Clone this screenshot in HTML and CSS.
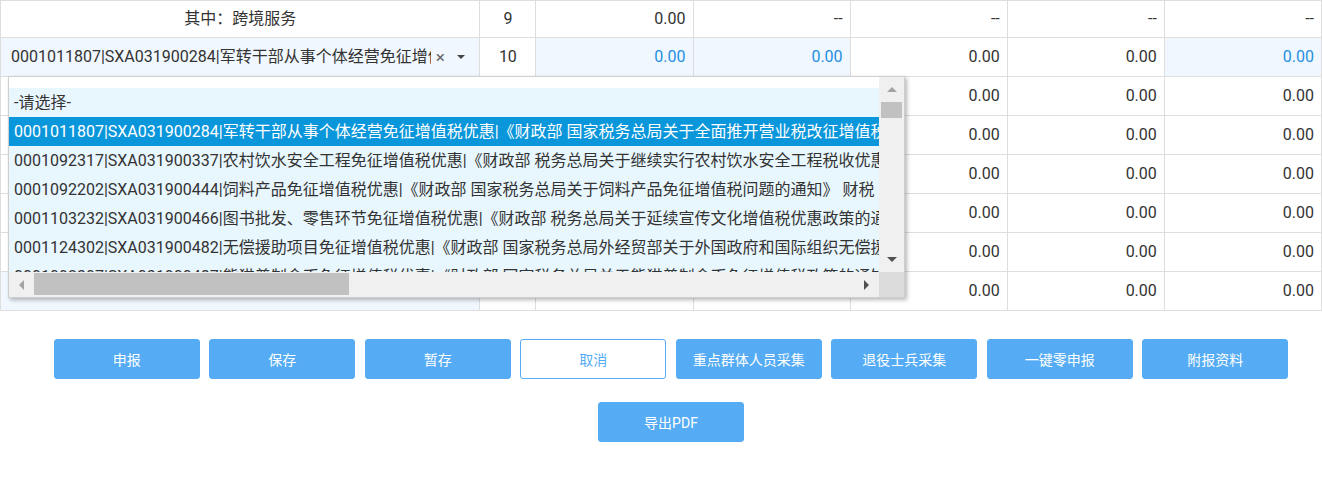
FILE: index.html
```html
<!DOCTYPE html>
<html lang="zh-CN">
<head>
<meta charset="utf-8">
<title>减免税申报</title>
<link rel="stylesheet" href="styles.css">
</head>
<body>
<div class="page">
  <div class="grid-wrap">
    <table class="tbl">
      <colgroup>
        <col class="c-name"><col class="c-no"><col class="c-val"><col class="c-val"><col class="c-val"><col class="c-val"><col class="c-val">
      </colgroup>
      <tbody>
        <tr class="row first">
          <td class="center">其中：跨境服务</td>
          <td class="center">9</td>
          <td class="num">0.00</td>
          <td class="num">--</td>
          <td class="num">--</td>
          <td class="num">--</td>
          <td class="num">--</td>
        </tr>
        <tr class="row">
          <td class="sel-cell">
            <div class="select">
              <span class="sel-text">0001011807|SXA031900284|军转干部从事个体经营免征增值税优惠</span>
              <span class="clear">×</span>
              <span class="caret"></span>
            </div>
          </td>
          <td class="center">10</td>
          <td class="num edit">0.00</td>
          <td class="num edit">0.00</td>
          <td class="num">0.00</td>
          <td class="num">0.00</td>
          <td class="num edit">0.00</td>
        </tr>
        <tr class="row">
          <td></td><td class="center">11</td>
          <td class="num">0.00</td><td class="num">0.00</td><td class="num">0.00</td><td class="num">0.00</td><td class="num">0.00</td>
        </tr>
        <tr class="row">
          <td></td><td class="center">12</td>
          <td class="num">0.00</td><td class="num">0.00</td><td class="num">0.00</td><td class="num">0.00</td><td class="num">0.00</td>
        </tr>
        <tr class="row">
          <td></td><td class="center">13</td>
          <td class="num">0.00</td><td class="num">0.00</td><td class="num">0.00</td><td class="num">0.00</td><td class="num">0.00</td>
        </tr>
        <tr class="row">
          <td></td><td class="center">14</td>
          <td class="num">0.00</td><td class="num">0.00</td><td class="num">0.00</td><td class="num">0.00</td><td class="num">0.00</td>
        </tr>
        <tr class="row">
          <td></td><td class="center">15</td>
          <td class="num">0.00</td><td class="num">0.00</td><td class="num">0.00</td><td class="num">0.00</td><td class="num">0.00</td>
        </tr>
        <tr class="row">
          <td class="sel-cell blank"></td><td class="center">16</td>
          <td class="num">0.00</td><td class="num">0.00</td><td class="num">0.00</td><td class="num">0.00</td><td class="num">0.00</td>
        </tr>
      </tbody>
    </table>

    <div class="dropdown">
      <div class="list">
        <ul class="options">
          <li class="opt">-请选择-</li>
          <li class="opt active">0001011807|SXA031900284|军转干部从事个体经营免征增值税优惠|《财政部 国家税务总局关于全面推开营业税改征增值税试点的通知》</li>
          <li class="opt">0001092317|SXA031900337|农村饮水安全工程免征增值税优惠|《财政部 税务总局关于继续实行农村饮水安全工程税收优惠政策的公告》</li>
          <li class="opt">0001092202|SXA031900444|饲料产品免征增值税优惠|《财政部 国家税务总局关于饲料产品免征增值税问题的通知》 财税〔2001〕121号</li>
          <li class="opt">0001103232|SXA031900466|图书批发、零售环节免征增值税优惠|《财政部 税务总局关于延续宣传文化增值税优惠政策的通知》</li>
          <li class="opt">0001124302|SXA031900482|无偿援助项目免征增值税优惠|《财政部 国家税务总局外经贸部关于外国政府和国际组织无偿援助项目免征增值税的通知》</li>
          <li class="opt">0001092307|SXA031900487|熊猫普制金币免征增值税优惠|《财政部 国家税务总局关于熊猫普制金币免征增值税政策的通知》</li>
        </ul>
      </div>
      <div class="vscroll">
        <div class="sb-btn"><span class="tri up"></span></div>
        <div class="vthumb"></div>
        <div class="sb-space"></div>
        <div class="sb-btn"><span class="tri down"></span></div>
      </div>
      <div class="hscroll">
        <div class="sb-btn"><span class="tri left"></span></div>
        <div class="hthumb"></div>
        <div class="sb-space"></div>
        <div class="sb-btn"><span class="tri right"></span></div>
      </div>
      <div class="corner"></div>
    </div>
  </div>

  <div class="actions">
    <div class="btn-row">
      <button class="btn">申报</button>
      <button class="btn">保存</button>
      <button class="btn">暂存</button>
      <button class="btn ghost">取消</button>
      <button class="btn">重点群体人员采集</button>
      <button class="btn">退役士兵采集</button>
      <button class="btn">一键零申报</button>
      <button class="btn">附报资料</button>
    </div>
    <div class="btn-row second">
      <button class="btn">导出PDF</button>
    </div>
  </div>
</div>
</body>
</html>
```

FILE: styles.css
```css
* { box-sizing: border-box; }

html, body {
  margin: 0;
  padding: 0;
  background: #fff;
}

body {
  font-family: Roboto, "Noto Sans CJK SC", sans-serif;
  font-size: 16px;
  color: #333;
}

.page {
  width: 1322px;
}

.grid-wrap {
  position: relative;
}

.tbl {
  width: 1322px;
  table-layout: fixed;
  border-collapse: collapse;
  border: 1px solid #dedede;
}

.c-name { width: 479px; }
.c-no { width: 56px; }
.c-val { width: 157px; }

.tbl td {
  border: 1px solid #dedede;
  padding: 0 7px;
  line-height: 20px;
  white-space: nowrap;
  overflow: hidden;
}

.row { height: 39px; }
.row.first { height: 37px; }

.center { text-align: center; }
.num { text-align: right; }

.edit {
  background: #f0f7fe;
  color: #2590e4;
}

.sel-cell {
  background: #f0f7fe;
}
.tbl td.sel-cell { padding: 0; }

.select {
  display: flex;
  align-items: center;
  padding: 0 14px 0 10px;
}

.sel-text {
  flex: 1;
  min-width: 0;
  overflow: hidden;
  white-space: nowrap;
}

.clear {
  width: 12px;
  margin-left: 3px;
  text-align: center;
  color: #666;
  font-size: 17px;
}

.caret {
  width: 0;
  height: 0;
  margin-left: 11px;
  border-left: 4px solid transparent;
  border-right: 4px solid transparent;
  border-top: 4px solid #444;
}

/* dropdown */
.dropdown {
  position: absolute;
  left: 8px;
  top: 76px;
  width: 897px;
  height: 222px;
  border: 1px solid #cfcfcf;
  background: #fff;
  box-shadow: 2px 2px 4px rgba(0, 0, 0, 0.28);
  display: grid;
  grid-template-columns: 1fr 25px;
  grid-template-rows: 1fr 25px;
}

.list {
  overflow: hidden;
  padding-top: 11px;
  background: #fff;
}

.options {
  list-style: none;
  margin: 0;
  padding: 0;
  background: #e8f6fe;
}

.opt {
  height: 29px;
  line-height: 29px;
  padding-left: 5px;
  white-space: nowrap;
  overflow: hidden;
  color: #333;
}

.opt.active {
  background: #0a96da;
  color: #fff;
}

.vscroll {
  background: #f0f0f0;
  display: flex;
  flex-direction: column;
}

.hscroll {
  background: #f0f0f0;
  display: flex;
}

.sb-btn {
  flex: 0 0 25px;
  display: flex;
  align-items: center;
  justify-content: center;
}

.sb-space { flex: 1; }

.vthumb {
  height: 16px;
  margin: 0 2px;
  background: #c1c1c1;
}

.hthumb {
  width: 315px;
  margin: 1px 0 2px;
  background: #c1c1c1;
}

.corner { background: #dcdcdc; }

.tri {
  width: 0;
  height: 0;
}
.tri.up {
  border-left: 5px solid transparent;
  border-right: 5px solid transparent;
  border-bottom: 5px solid #a3a3a3;
}
.tri.down {
  border-left: 5px solid transparent;
  border-right: 5px solid transparent;
  border-top: 5px solid #505050;
}
.tri.left {
  border-top: 5px solid transparent;
  border-bottom: 5px solid transparent;
  border-right: 5px solid #a3a3a3;
}
.tri.right {
  border-top: 5px solid transparent;
  border-bottom: 5px solid transparent;
  border-left: 5px solid #505050;
}

/* actions */
.actions {
  margin-top: 28px;
  padding-left: 20px;
}

.btn-row {
  display: flex;
  justify-content: center;
  gap: 9.5px;
}

.btn-row.second { margin-top: 23px; }

.btn {
  width: 146px;
  height: 40px;
  padding: 0;
  border: 1px solid #55acf4;
  border-radius: 3px;
  background: #55acf4;
  color: #fff;
  font-family: Roboto, "Noto Sans CJK SC", sans-serif;
  font-size: 14px;
  cursor: pointer;
}

.btn.ghost {
  background: #fff;
  color: #55acf4;
}
```
